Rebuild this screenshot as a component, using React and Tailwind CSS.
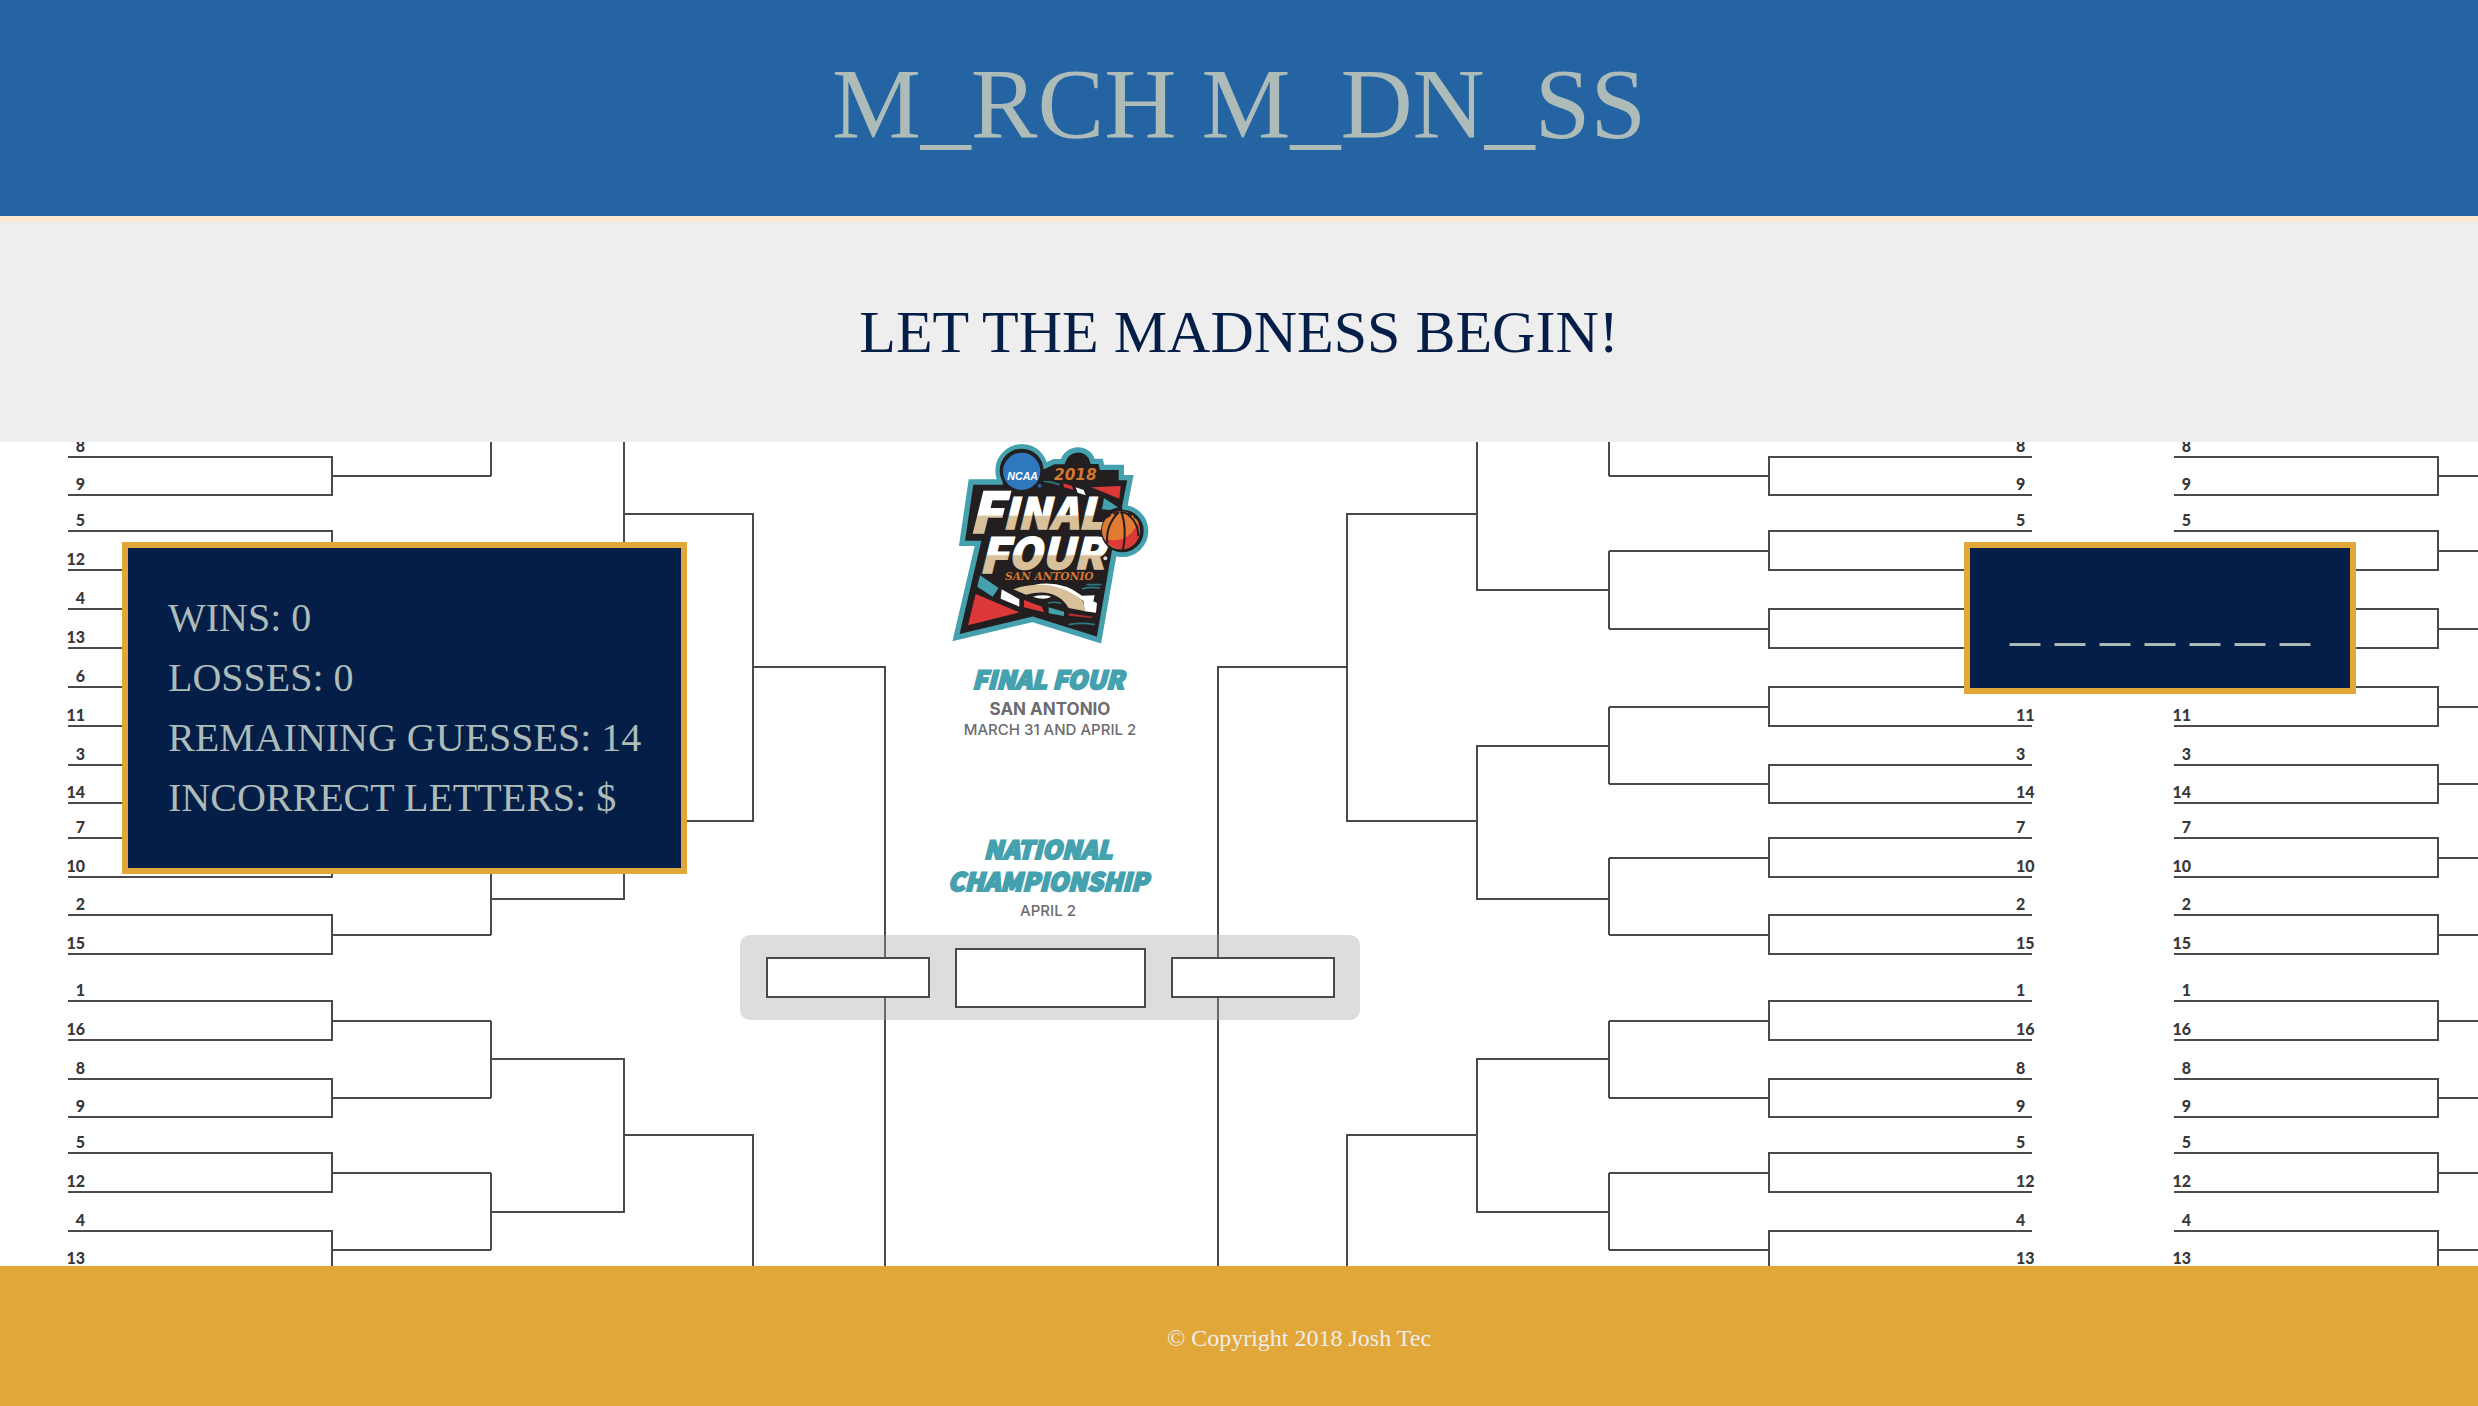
const LINE = "#4b494b";

/* Opening-round slots of one side: seed number and the height of its rule. */
const SLOTS = [
  [8, 457], [9, 495], [5, 531], [12, 570], [4, 609], [13, 648],
  [6, 687], [11, 726], [3, 765], [14, 803], [7, 838], [10, 877],
  [2, 915], [15, 954], [1, 1001], [16, 1040], [8, 1079], [9, 1117],
  [5, 1153], [12, 1192], [4, 1231], [13, 1269],
];
const PAIRS = SLOTS.filter((_, i) => i % 2 === 0).map((slot, i) => [slot[1], SLOTS[i * 2 + 1][1]]);

/* Pairs of winners that meet in each later round. */
const ROUND_2 = [[400, 476], [551, 629], [707, 784], [858, 935], [1021, 1098], [1173, 1250]];
const ROUND_3 = [[437, 590], [746, 899], [1059, 1212]];
const ROUND_4 = [[514, 821], [1135, 1450]];
const SEMI_FINAL = 667;

/* Seeds of the slots that lie under the word panel. */
const UNDER_WORD_PANEL = [570, 609, 648, 687];

const middle = ([a, b]) => Math.round((a + b) / 2);

function Side({ x, anchor, seedX, hidden = [] }) {
  const [start, r1, r2, r3, r4, r5] = x;
  const lines = [
    ...PAIRS.map(([a, b]) => `M${start} ${a}H${r1}V${b}H${start}`),
    ...PAIRS.map((p) => `M${r1} ${middle(p)}H${r2}`),
    ...ROUND_2.map(([a, b]) => `M${r2} ${a}V${b}`),
    ...ROUND_3.map(([a, b]) => `M${r2} ${a}H${r3}V${b}H${r2}`),
    ...ROUND_4.map(([a, b]) => `M${r3} ${a}H${r4}V${b}H${r3}`),
    `M${r4} ${SEMI_FINAL}H${r5}V1300`,
  ].join("");
  return (
    <g>
      <path d={lines} fill="none" stroke={LINE} strokeWidth="2" />
      <g className="font-['Lato',sans-serif] text-[16px] font-black" fill="#3a3839" textAnchor={anchor}>
        {SLOTS.filter(([, y]) => y < 1280 && !hidden.includes(y)).map(([seed, y]) => (
          <text key={y} x={seedX} y={y - 5}>{seed}</text>
        ))}
      </g>
    </g>
  );
}

function Championship() {
  return (
    <g>
      <rect x="740" y="935" width="620" height="85" rx="10" fill="#dcddde" />
      <path d="M885 935V1020M1218 935V1020" stroke="#6b696b" strokeWidth="2" />
      <g fill="#fff" stroke={LINE} strokeWidth="2">
        <rect x="767" y="958" width="162" height="39" />
        <rect x="956" y="949" width="189" height="58" />
        <rect x="1172" y="958" width="162" height="39" />
      </g>
    </g>
  );
}

function Labels() {
  return (
    <g textAnchor="middle">
      <g
        className="font-['Noto_Sans_CJK_SC',sans-serif] text-[25px] font-black italic"
        fill="#45a1ae"
        stroke="#45a1ae"
        strokeWidth="2"
      >
        <text x="1048" y="689">FINAL FOUR</text>
        <text x="1048" y="859">NATIONAL</text>
        <text x="1048" y="891">CHAMPIONSHIP</text>
      </g>
      <g className="font-['Inter',sans-serif]" fill="#6d6b70">
        <text x="1050" y="715" className="text-[17px] font-bold">SAN ANTONIO</text>
        <text x="1050" y="735" className="text-[15px] font-medium">MARCH 31 AND APRIL 2</text>
        <text x="1048" y="916" className="text-[15px] font-medium">APRIL 2</text>
      </g>
    </g>
  );
}

function FinalFourLogo() {
  return (
    <g transform="translate(920 430) scale(0.33333)">
      <defs>
        <linearGradient id="final" gradientUnits="userSpaceOnUse" x1="0" y1="170" x2="0" y2="320">
          <stop offset="0.56" stopColor="#fff" />
          <stop offset="0.6" stopColor="#d8c19a" />
        </linearGradient>
        <linearGradient id="four" gradientUnits="userSpaceOnUse" x1="0" y1="310" x2="0" y2="430">
          <stop offset="0.52" stopColor="#fff" />
          <stop offset="0.57" stopColor="#d8c19a" />
        </linearGradient>
      </defs>
      <g fill="#231f20" stroke="#45a1ae" strokeWidth="16" strokeLinejoin="miter">
        <circle cx="305" cy="122" r="71" />
        <circle cx="607" cy="303" r="70" />
        <path d="M153 156H240C232 100 262 51 305 51C345 51 368 78 374 108L402 95H428C442 48 506 48 518 94H542L546 112H604V143H631L614 232L640 300L583 366L537 630L338 568L108 623L174 340H126Z" />
      </g>
      <circle cx="305" cy="122" r="66" fill="#231f20" />
      <circle cx="305" cy="124" r="56" fill="#2f78bd" />
      <circle cx="359" cy="167" r="6" fill="#2f5f96" />
      <text x="308" y="150" textAnchor="middle" fill="#fff" className="font-['Liberation_Sans',sans-serif] text-[32px] font-bold italic">NCAA</text>
      <text x="466" y="150" textAnchor="middle" fill="#d4762f" className="font-['DejaVu_Sans',sans-serif] text-[46px] font-bold italic">2018</text>

      <path d="M372 152Q396 152 421 162L416 166Q394 158 372 156Z" fill="#2f7882" />
      <path d="M430 160L456 168L460 179L432 172Z" fill="#dd3838" />
      <path d="M467 172L491 180L497 196L473 188Z" fill="#fff" />
      <path d="M514 172L602 168L598 206Z" fill="#dd3838" />
      <path d="M552 204L594 232L570 240L546 238Z" fill="#45a1ae" />

      <g className="font-['Noto_Sans_CJK_SC',sans-serif] font-black italic" strokeWidth="4">
        <text x="146" y="308" fill="url(#final)" stroke="url(#final)">
          <tspan className="text-[168px]">F</tspan>
          <tspan dy="-11" className="text-[128px]">INAL</tspan>
        </text>
        <text x="176" y="428" fill="url(#four)" stroke="url(#four)">
          <tspan className="text-[144px]">F</tspan>
          <tspan dy="-11" className="text-[128px]">OUR</tspan>
        </text>
      </g>
      <circle cx="556" cy="385" r="6" fill="#d9d9d9" />
      <text x="388" y="450" textAnchor="middle" fill="#d4762f" className="font-['DejaVu_Serif',serif] text-[32px] font-bold italic">SAN ANTONIO</text>

      <circle cx="607" cy="303" r="64" fill="#231f20" />
      <circle cx="603" cy="301" r="57" fill="#e17a33" />
      <path d="M552 327Q625 345 655 277Q668 322 637 347Q590 374 552 327Z" fill="#dd3838" />
      <g fill="none" stroke="#231f20" strokeWidth="6">
        <path d="M604 244Q622 300 609 358" />
        <path d="M597 246Q556 285 562 340" />
        <path d="M612 246Q654 270 655 318" />
        <path d="M560 262Q605 232 647 264" strokeDasharray="14 8" />
      </g>

      <path d="M180 436L236 474L218 500L172 470Z" fill="#45a1ae" />
      <path d="M245 478L298 508V530L242 506Z" fill="#fff" />
      <path d="M312 510L366 530L372 547L312 532Z" fill="#dd3838" />
      <path d="M386 532L432 545V558L386 550Z" fill="#45a1ae" />
      <path d="M446 550L518 560L516 564L446 557Z" fill="#b32c30" />
      <path d="M167 492L298 547L144 586Z" fill="#dd3838" />
      <path d="M344 464Q424 450 486 497L524 496L520 514L531 519L528 548L494 544L490 512L440 484Z" fill="#fff" />
      <path d="M280 478Q330 458 396 467Q448 478 488 512L497 544L446 534Q408 470 318 494Z" fill="#d8c19a" />
      <path d="M338 500Q372 492 394 500Q372 512 338 500Z" fill="#fff" />
      <path d="M486 477Q504 469 540 474M500 464H544M384 519Q406 514 424 520M446 584Q484 576 524 584" fill="none" stroke="#2f7882" strokeWidth="5" />
    </g>
  );
}

function Bracket() {
  return (
    <svg
      className="absolute inset-0 h-full w-full"
      viewBox="0 442 2478 824"
      preserveAspectRatio="xMidYMid slice"
      role="img"
      aria-label="Tournament bracket"
    >
      <Side x={[68, 332, 491, 624, 753, 885]} anchor="end" seedX={85} />
      <Side x={[2032, 1769, 1609, 1477, 1347, 1218]} anchor="start" seedX={2016} hidden={UNDER_WORD_PANEL} />
      <Side x={[2174, 2438, 2597, 2730, 2859, 2991]} anchor="end" seedX={2191} hidden={UNDER_WORD_PANEL} />
      <Championship />
      <Labels />
      <FinalFourLogo />
    </svg>
  );
}

function Panel({ className, children }) {
  return (
    <div className={`relative border-6 border-[#e2a739] bg-[#041e47] p-10 leading-[60px] whitespace-nowrap text-[#adbbb9] ${className}`}>
      {children}
    </div>
  );
}

export default function App() {
  return (
    <div className="flex min-h-screen flex-col bg-white font-['Liberation_Serif',serif]">
      <header className="border-b-6 border-[#fdead1] bg-[#2464a2] pt-[54px] pb-[62px] text-center">
        <h1 className="text-[100px] leading-[100px] text-[#adbbb9]">M_RCH M_DN_SS</h1>
      </header>
      <section className="bg-[#eeeeee] py-20 text-center">
        <h2 className="text-[60px] leading-[60px] text-[#041e47]">LET THE MADNESS BEGIN!</h2>
      </section>
      <main className="relative flex flex-1 items-start justify-between overflow-hidden px-[122px] pt-[100px] pb-20">
        <Bracket />
        <Panel className="text-[40px]">
          <p>WINS: 0</p>
          <p>LOSSES: 0</p>
          <p>REMAINING GUESSES: 14</p>
          <p>INCORRECT LETTERS: $</p>
        </Panel>
        <Panel className="text-[60px]">
          <p>_ _ _ _ _ _ _</p>
        </Panel>
      </main>
      <footer className="bg-[#e2a739] pt-[60px] pb-14 pl-30 text-center text-2xl leading-6 text-[#eeeeee]">
        © Copyright 2018 Josh Tec
      </footer>
    </div>
  );
}
